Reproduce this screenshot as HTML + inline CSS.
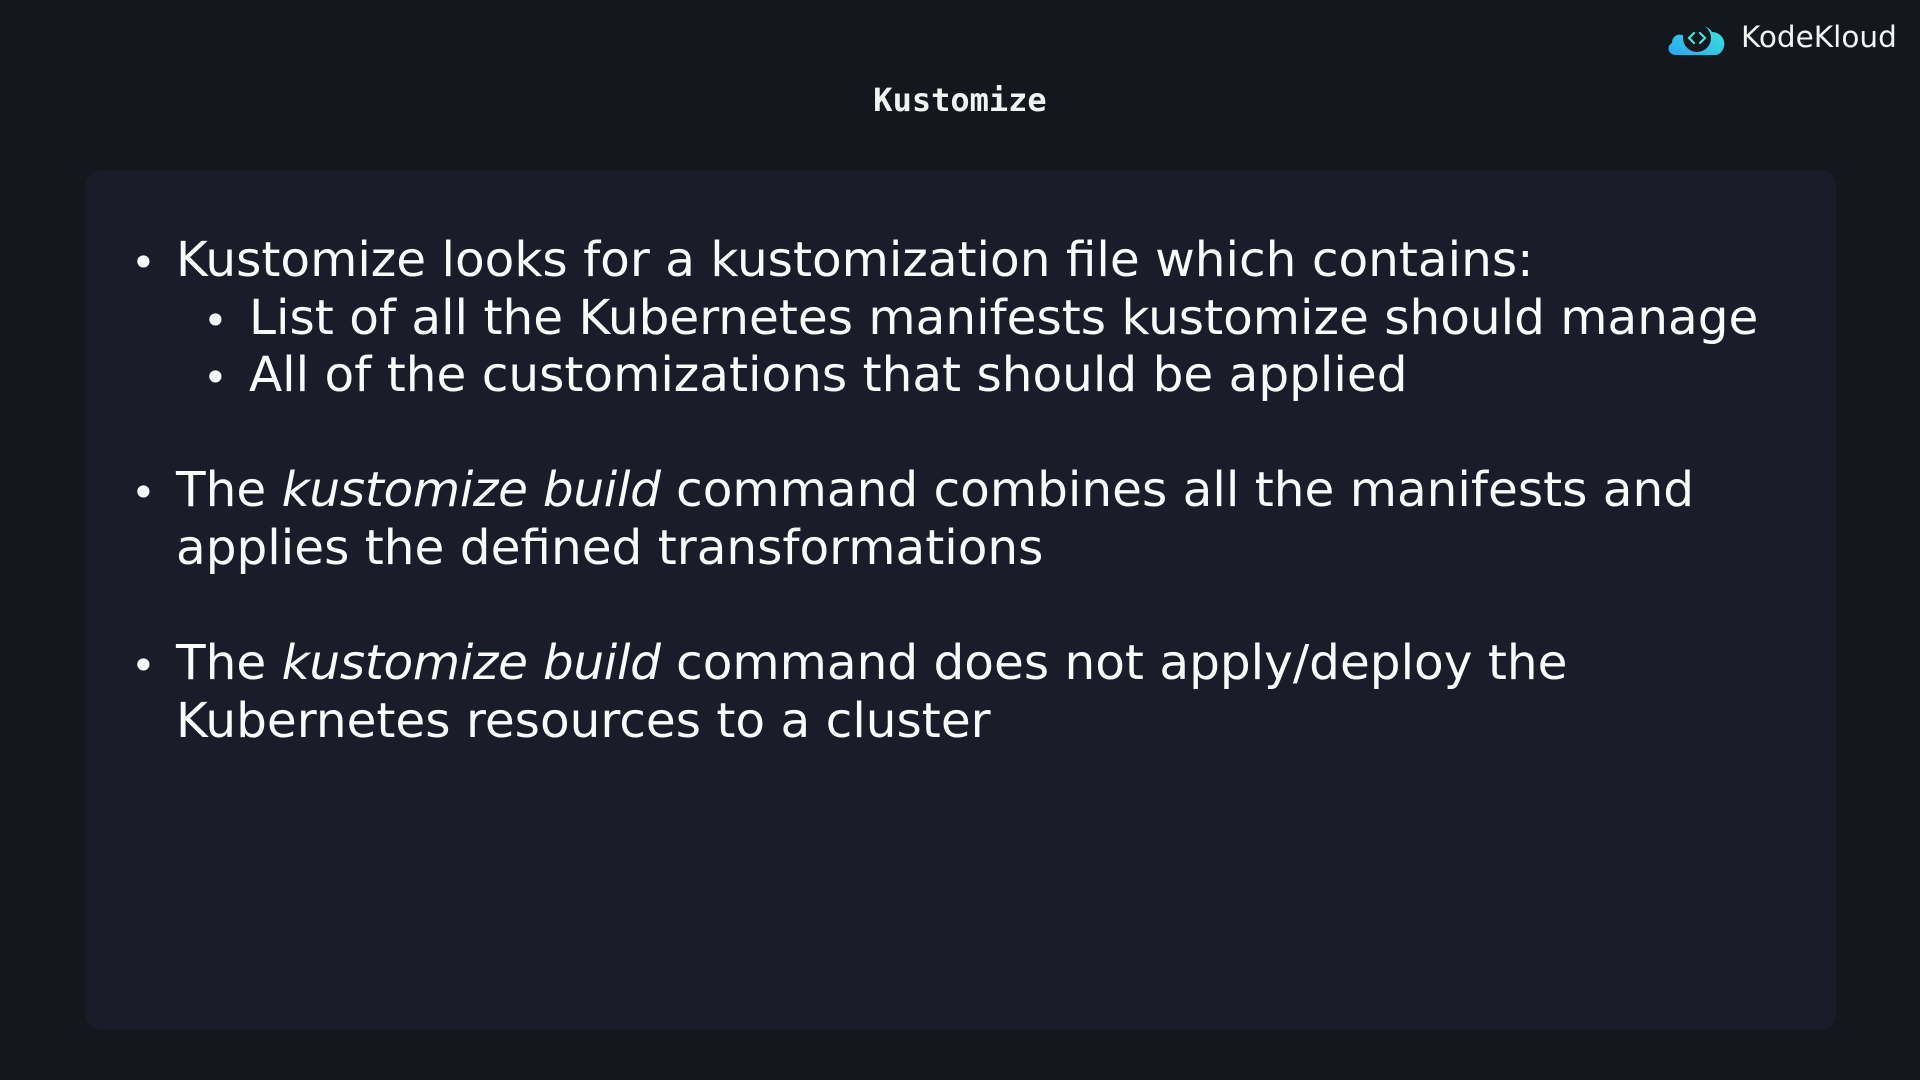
<!DOCTYPE html>
<html><head><meta charset="utf-8"><style>
html,body{margin:0;padding:0;width:1920px;height:1080px;overflow:hidden;background:#14171e;}
body{position:relative;font-family:"DejaVu Sans","Liberation Sans",sans-serif;color:#fff;}
.title{position:absolute;left:0;width:1920px;top:81px;text-align:center;font-family:"DejaVu Sans Mono","Liberation Mono",monospace;font-weight:bold;font-size:32px;color:#f2f2f2;}
.card{position:absolute;left:86px;top:171px;width:1750px;height:858px;background:#1a1d29;border-radius:14px;}
.l{position:absolute;font-size:48.5px;line-height:1;white-space:nowrap;color:#fafafa;}
.b{position:absolute;font-size:42px;line-height:1;color:#fafafa;}
i{font-style:italic;letter-spacing:-0.3px;}
.logo{position:absolute;left:1666px;top:18px;}
.kk{position:absolute;left:1741px;top:20px;font-family:"DejaVu Sans","Liberation Sans",sans-serif;font-size:29.5px;color:#f4f4f4;}
</style></head><body>
<div class="title">Kustomize</div>
<svg class="logo" width="62" height="40" viewBox="0 0 62 40">
<defs><linearGradient id="g" x1="0" y1="1" x2="1" y2="0"><stop offset="0" stop-color="#2aa6f0"/><stop offset="1" stop-color="#3ee8d8"/></linearGradient></defs>
<path d="M10 37 C2 37 0 28 6 25 C6 17 14 15 18 18 C22 6 40 4 46 14 C56 14 62 25 56 33 C54 36 52 37 48 37 Z" fill="url(#g)"/>
<circle cx="31" cy="20" r="14" fill="#14171e"/>
<path d="M28 15 L23 20 L28 25 M34 15 L39 20 L34 25" stroke="#3ee8d8" stroke-width="2.2" fill="none" stroke-linecap="round"/>
</svg>
<div class="kk">KodeKloud</div>
<div class="card"></div>
<div class="b" style="left:131px;top:242px">•</div>
<div class="l" style="left:176px;top:236px">Kustomize looks for a kustomization file which contains:</div>
<div class="b" style="left:203px;top:300px">•</div>
<div class="l" style="left:249px;top:294px">List of all the Kubernetes manifests kustomize should manage</div>
<div class="b" style="left:203px;top:357px">•</div>
<div class="l" style="left:249px;top:351px">All of the customizations that should be applied</div>
<div class="b" style="left:131px;top:472px">•</div>
<div class="l" style="left:176px;top:466px">The <i>kustomize build</i> command combines all the manifests and</div>
<div class="l" style="left:176px;top:524px">applies the defined transformations</div>
<div class="b" style="left:131px;top:645px">•</div>
<div class="l" style="left:176px;top:639px">The <i>kustomize build</i> command does not apply/deploy the</div>
<div class="l" style="left:176px;top:697px">Kubernetes resources to a cluster</div>
</body></html>
